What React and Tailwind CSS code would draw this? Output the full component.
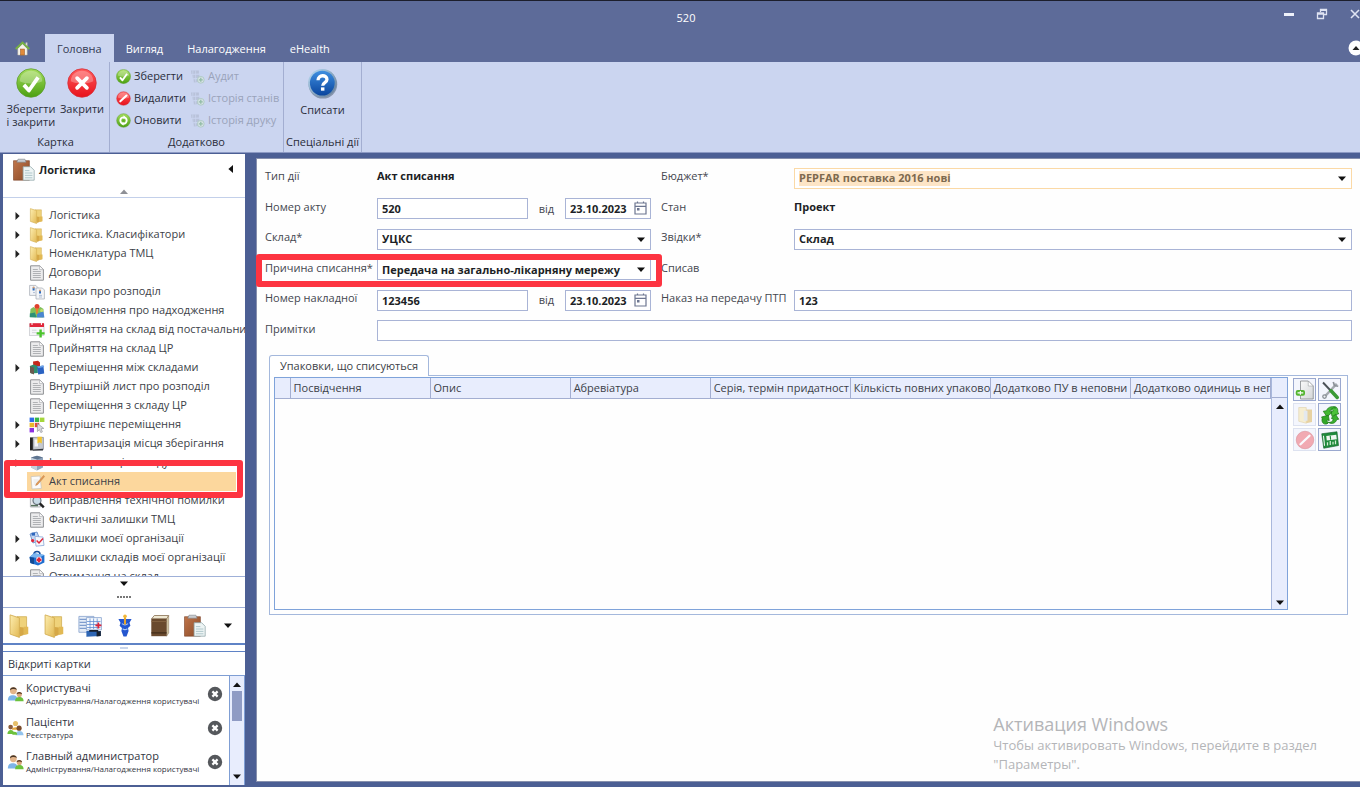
import React from "react";

/* ---------- shared gradients ---------- */
function Gradients() {
  const stops = (a, b) => [
    <stop key="a" offset="0" stopColor={a} />,
    <stop key="b" offset="1" stopColor={b} />,
  ];
  return (
    <svg width="0" height="0" className="absolute" aria-hidden="true">
      <defs>
        <linearGradient id="gGreen" x1="0" y1="0" x2="0" y2="1">{stops("#a5dd5c", "#4ba012")}</linearGradient>
        <linearGradient id="gRed" x1="0" y1="0" x2="0" y2="1">{stops("#ff5a5a", "#e8121c")}</linearGradient>
        <linearGradient id="gBlue" x1="0" y1="0" x2="0" y2="1">{stops("#3f8fe0", "#0a459e")}</linearGradient>
        <linearGradient id="gRing" x1="0" y1="0" x2="1" y2="1">{stops("#b9dcf5", "#5d7894")}</linearGradient>
        <linearGradient id="gFolder" x1="0" y1="0" x2="1" y2="1">{stops("#fdeeb0", "#e2b954")}</linearGradient>
        <linearGradient id="gPage" x1="0" y1="0" x2="1" y2="1">{stops("#fafafa", "#d4d6d8")}</linearGradient>
        <linearGradient id="gBrown" x1="0" y1="0" x2="1" y2="1">{stops("#c0754a", "#8a4a28")}</linearGradient>
      </defs>
    </svg>
  );
}

const Svg = ({ s = 16, children, className = "" }) => (
  <svg width={s} height={s} viewBox="0 0 16 16" className={"shrink-0 " + className} aria-hidden="true">
    {children}
  </svg>
);

/* ---------- ribbon icons ---------- */
const Gloss = () => <path d="M2 7a6 5.6 0 0 1 12 0C11 8.6 5 8.6 2 7z" fill="#fff" opacity=".28" />;
const CheckBall = ({ s }) => (
  <Svg s={s}>
    <circle cx="8" cy="8" r="7.6" fill="url(#gGreen)" stroke="#5c9c2d" strokeWidth=".4" />
    <Gloss />
    <path d="M4.2 9 6.9 12 11.8 5" fill="none" stroke="#fff" strokeWidth="2" strokeLinejoin="round" />
  </Svg>
);
const CrossBall = ({ s }) => (
  <Svg s={s}>
    <circle cx="8" cy="8" r="7.6" fill="url(#gRed)" stroke="#d4303a" strokeWidth=".4" />
    <Gloss />
    <path d="M5.4 5.4l5.2 5.2M10.6 5.4l-5.2 5.2" stroke="#fff" strokeWidth="2" strokeLinecap="round" />
  </Svg>
);
const SlashBall = ({ s }) => (
  <Svg s={s}>
    <circle cx="8" cy="8" r="7.3" fill="url(#gRed)" stroke="#d4303a" strokeWidth=".5" />
    <Gloss />
    <path d="M4.6 11 11.2 4.8" stroke="#fff" strokeWidth="2.2" strokeLinecap="round" />
  </Svg>
);
const RefreshBall = ({ s }) => (
  <Svg s={s}>
    <circle cx="8" cy="8" r="7.3" fill="url(#gGreen)" stroke="#5c9c2d" strokeWidth=".5" />
    <circle cx="8" cy="8" r="3.4" fill="none" stroke="#fff" strokeWidth="2" />
    <path d="M8 2.400 10.400 4.600 8 6.600zM8 13.600 5.600 11.400 8 9.400z" fill="#fff" />
    <circle cx="8" cy="8" r="1.200" fill="#5cae22" />
  </Svg>
);
const HelpBall = () => (
  <Svg s={31}>
    <circle cx="8.2" cy="8.4" r="7.4" fill="#5a6a80" opacity=".6" />
    <circle cx="7.9" cy="7.8" r="7.3" fill="url(#gRing)" />
    <circle cx="7.9" cy="7.8" r="6.4" fill="url(#gBlue)" />
    <path d="M5.7 6.3c0-3 4.600-3 4.600-.4 0 1.700-2.200 1.500-2.200 3.200" fill="none" stroke="#fff" strokeWidth="1.700" />
    <rect x="7.2" y="10" width="1.8" height="1.7" fill="#fff" />
  </Svg>
);
const AuditIcon = () => (
  <Svg s={15} className="opacity-60">
    <path d="M1 1.600h8.500v3.200l-8 .4zM2 6.200h8v3l-7 .6zM3.600 11h5v2.800l-4.400.6z" fill="#aeb7cd" />
    <path d="M3 1.600v12M6 1.600v12" stroke="#cbd5f0" strokeWidth=".8" fill="none" />
    <circle cx="11.500" cy="11.500" r="3.600" fill="#dfeadf" stroke="#8fbf98" strokeWidth=".8" />
    <path d="M11.500 9.400v4.200M9.400 11.500h4.200" stroke="#6fae78" strokeWidth="1.400" />
  </Svg>
);
const HomeIcon = () => (
  <Svg s={15}>
    <path d="M3 8v7h10V8L8 3z" fill="#f6f3ea" stroke="#b9b29c" strokeWidth=".5" />
    <path d="M.8 8.6 8 1.6l7.2 7" fill="none" stroke="#76b043" strokeWidth="2.1" />
    <path d="M11.4 1.6h1.8v4l-1.8-1.8z" fill="#d9d6c8" />
    <rect x="6" y="8.6" width="4" height="6.4" fill="#e08a3a" stroke="#9a531a" strokeWidth=".6" />
  </Svg>
);

/* ---------- tree icons ---------- */
const Folder = ({ s = 16 }) => (
  <Svg s={s}>
    <path d="M6 1.800h6.400v11.4H6z" fill="#efd27a" stroke="#cfab50" strokeWidth=".5" />
    <path d="M10.500 8.500h3v4.800l-3 .7z" fill="#e2b954" />
    <path d="M1.400.6 7.600 2.600v13L1.400 13.4z" fill="url(#gFolder)" stroke="#d4ae52" strokeWidth=".6" />
    <path d="M7.800 8.6l2.700.4v5L7.800 15z" fill="#d6a846" />
  </Svg>
);
const Page = () => (
  <Svg>
    <path d="M1.600.8h9.200l3.600 3.600v10.800H1.600z" fill="#ececed" stroke="#8f9194" strokeWidth="1" />
    <path d="M10.600.8v3.800h3.800z" fill="#fff" stroke="#a2a4a7" strokeWidth=".6" />
    <path d="M3.800 4.500h5M3.800 6.500h8M3.800 8.500h8M3.800 10.500h8M3.800 12.500h8" stroke="#b0b2b5" strokeWidth="1" />
  </Svg>
);
const TwoPages = () => (
  <Svg>
    <path d="M.6 1.4h6.2l2 2v8H.6z" fill="#f3f5f8" stroke="#a3a9b2" strokeWidth=".7" />
    <path d="M7 4h6.4l2 2v9H7z" fill="#f3f5f8" stroke="#a3a9b2" strokeWidth=".7" />
    <path d="M3.6 3.6h2v3h-2zM10 6.6h2v3h-2z" fill="#2f6fc2" />
    <path d="M4 8.6h2M10 11.4h3M10 13h3" stroke="#9fb0ca" strokeWidth=".8" />
    <circle cx="4.6" cy="3.6" r="1" fill="#d79b6c" />
    <circle cx="11" cy="6.6" r="1" fill="#d79b6c" />
  </Svg>
);
const Crowd = () => (
  <Svg>
    <path d="M1.500 6l3-2 3 2 4-2 3 2v8.500L.8 14z" fill="#7fc05c" />
    <path d="M.8 10.500l5-1 2 5-7-.3z" fill="#2e8f78" />
    <path d="M8 10.500l6.400-2 1 6H8z" fill="#4a86d0" />
    <circle cx="8" cy="3.400" r="2.500" fill="#e0402d" />
    <path d="M6.400 5.400h3.200L8.600 11H7.400z" fill="#e6842d" />
    <circle cx="12.600" cy="7.400" r="1.500" fill="#c4dd6a" />
  </Svg>
);
const CalendarAdd = () => (
  <Svg>
    <rect x=".6" y="2" width="14.400" height="11.6" fill="#f6f6f8" stroke="#b9bcc2" strokeWidth=".6" />
    <rect x=".6" y="1.2" width="14.400" height="3.800" fill="#e0263a" />
    <path d="M3 .6v2.400M12.400.6v2.400" stroke="#fff" strokeWidth="1" />
    <path d="M3 8.2h4.500M3 10.6h4.500" stroke="#d5d7dc" strokeWidth="1" />
    <path d="M11.6 7.4v8M7.600 11.4h8" stroke="#4cc42c" strokeWidth="2.400" />
  </Svg>
);
const Cubes = () => (
  <Svg>
    <path d="M4 1.6l5-.8 2 1.6v6L4.600 9z" fill="#c5281c" />
    <path d="M.8 6l4-1.400 4 1.4v7l-7 .6z" fill="#2f8f6f" />
    <path d="M1 6.600l4 .8v7l-4-1.6z" fill="#6b5a50" />
    <path d="M8 6.600l6.400-1 .8 8-6 1z" fill="#2a62c2" />
    <path d="M8 6.600l1.600 1.400 5.600-1-.8-1.400z" fill="#6ea4e8" />
  </Svg>
);
const Squares = () => (
  <Svg>
    <rect x=".6" y=".6" width="4.400" height="4.400" fill="#2d6bea" />
    <rect x="5.800" y=".6" width="4.400" height="4.400" fill="#34b54a" />
    <rect x="11" y=".6" width="4.400" height="4.400" fill="#a5d63b" />
    <rect x=".6" y="5.800" width="4.400" height="4.400" fill="#e8b92c" />
    <rect x="5.800" y="5.800" width="4.400" height="4.400" fill="#e24a3a" />
    <rect x=".6" y="11" width="4.400" height="4.400" fill="#8b2ee0" />
    <path d="M8.400 6.400l6.400 5-2.800.4 1.400 3-1.600.8-1.400-3-2 2z" fill="#dcdce0" stroke="#93969c" strokeWidth=".7" />
  </Svg>
);
const Ledger = () => (
  <Svg>
    <path d="M1 1.400h3v13H1z" fill="#222" />
    <path d="M4 1.400h10.400v12L4 14.600z" fill="#c6cad0" stroke="#6e727a" strokeWidth=".6" />
    <path d="M5.600 3.500h3.400v7H5.600z" fill="#f4f5f8" />
    <path d="M8.400.8h4.400v6.800l-2.200-1.400-2.200 1.400z" fill="#f3c52b" />
    <path d="M4 13.400l10-.6v1.800H4z" fill="#33363c" />
  </Svg>
);
const Database = () => (
  <Svg>
    <path d="M2 2.600 8 .8l6 1.800v10L8 15.400l-6-2.800z" fill="#8fa3bb" />
    <path d="M2 2.600 8 4.400v11L2 12.600z" fill="#c5d0dc" />
    <path d="M2 2.600 8 .8l6 1.800-6 1.800z" fill="#5f7590" />
  </Svg>
);
const NoteEdit = () => (
  <Svg>
    <path d="M2 2.600 11 2l1.400 12.400L3 15z" fill="#fbfbfb" stroke="#c6c2b8" strokeWidth=".7" />
    <path d="M4.400 6h5M4.600 8h5M4.800 10h4" stroke="#e2e2e2" strokeWidth=".8" />
    <path d="M14.600 1.400 7.400 9.600l-.8 2 2-.9 7-8.200z" fill="#e09a57" stroke="#b8743a" strokeWidth=".4" />
  </Svg>
);
const SearchPage = () => (
  <Svg>
    <path d="M1.400 1h10v13h-10z" fill="#e8eaec" stroke="#999ca0" strokeWidth=".7" />
    <circle cx="8" cy="7.600" r="4" fill="#c9dbe6" stroke="#6c7680" strokeWidth="1.200" />
    <path d="M10.800 10.400l4 4" stroke="#222" strokeWidth="2.400" />
    <path d="M2 12.600h7" stroke="#55705a" strokeWidth="1.400" />
  </Svg>
);
const OrgPages = () => (
  <Svg>
    <path d="M1 3l7-2 3 8-7 3z" fill="#c6d8f2" stroke="#5b84c4" strokeWidth=".8" />
    <path d="M6 5.400l8 .6 1 8.400-8 .8z" fill="#f6f8fc" stroke="#8ba7d6" strokeWidth=".8" />
    <path d="M7.600 9.400 10 12l4-4.600" fill="none" stroke="#e0263a" strokeWidth="1.500" />
    <path d="M2.600 1.600h3.400v3H2.600z" fill="#2e67bd" />
    <circle cx="3.600" cy="9.600" r="1.600" fill="#e0263a" />
  </Svg>
);
const MedBag = () => (
  <Svg>
    <path d="M5 4.400C5 .6 11 .6 11 4.400" fill="none" stroke="#174f9b" strokeWidth="1.600" />
    <path d="M.6 7 5 3.200 15.400 5v7.400L9 15.600 1.400 13z" fill="#1f6fd0" />
    <path d="M.6 7 5 3.200 15.400 5 9.600 8z" fill="#7bb6f0" />
    <path d="M.6 7 5 7.800v6.400L1.400 13z" fill="#124a94" />
    <circle cx="10" cy="9.800" r="3" fill="#f8dfe2" />
    <path d="M10 7.400v4.800M7.600 9.800h4.800" stroke="#e0263a" strokeWidth="2.200" />
  </Svg>
);

/* ---------- dock icons ---------- */
const Clipboard = ({ s = 24 }) => (
  <Svg s={s}>
    <path d="M1 1.800h10.600v13H1z" fill="url(#gBrown)" stroke="#7b4126" strokeWidth=".4" />
    <path d="M4 .8h4.600l.8 2H3.200z" fill="#c9ccd0" stroke="#7e8186" strokeWidth=".4" />
    <path d="M7.400 5.800h5l2.400 2.400v6.600H7.400z" fill="#edf4f4" stroke="#8ea5a8" strokeWidth=".5" />
    <path d="M8.600 8.400h3M8.600 10h5M8.600 11.600h5M8.600 13.200h5" stroke="#a9c2c6" strokeWidth=".6" />
  </Svg>
);
const Schedule = () => (
  <Svg s={24}>
    <path d="M.6 1.600h10v10.600H.6z" fill="#e4ecf7" stroke="#7f9ccb" strokeWidth=".5" />
    <path d="M1 3.600h6M1 5.600h6M1 7.600h6M1 9.600h6" stroke="#7f9dce" strokeWidth=".8" />
    <path d="M5.600 2.400h10v8.200h-10z" fill="#f4f8fd" stroke="#7f9ccb" strokeWidth=".5" />
    <path d="M6 5h9M6 7h9M6 9h9M8 3v7M10.400 3v7M12.800 3v7" stroke="#5b8ad0" strokeWidth=".5" />
    <path d="M13.600 5.600v4M11.600 7.600h4" stroke="#e0263a" strokeWidth="1.100" />
    <path d="M5.600 11.400h9.600v3.200l-9.600.6z" fill="#2d65b4" />
    <path d="M7.500 10.600h6v1.200h-6zM12.400 12l2.800-.6v3.200l-2.800.4z" fill="#17202e" />
  </Svg>
);
const Caduceus = () => (
  <Svg s={24}>
    <path d="M3.600 3.400h8.800L11 5.800l.6 2-1.600 1.600.4 2L9 15H7l-1.400-3.600.4-2L4.400 7.800l.6-2z" fill="#2456cf" />
    <path d="M6 6.400c1.600 1.400 2.400 1.400 4 0M6.400 9.800c1.200 1 2 1 3.200 0" stroke="#a9c8f7" strokeWidth=".8" fill="none" />
    <path d="M8 1v6" stroke="#e7a52c" strokeWidth="1.400" />
    <circle cx="8" cy="1.500" r="1.200" fill="#f1b73a" />
  </Svg>
);
const Book = () => (
  <Svg s={24}>
    <path d="M2.400 3.200 4.200 1h9.600l-1.200 2.200z" fill="#efe8d2" stroke="#80674a" strokeWidth=".5" />
    <path d="M12.400 3.200l1.400-2v11.400l-1.400 2.200z" fill="#d3c7a6" stroke="#80674a" strokeWidth=".3" />
    <path d="M2.200 3.200h10.200v11.600H2.200z" fill="#6a4a2e" />
    <path d="M2.200 5h10.200" stroke="#8b6a47" strokeWidth=".5" />
    <path d="M2.200 12.600h10.200" stroke="#3a2716" strokeWidth=".7" />
  </Svg>
);

/* ---------- card icons ---------- */
const Users = () => (
  <Svg s={17}>
    <path d="M.8 14.600c0-4 2-5 4.600-5s4.600 1 4.600 5z" fill="#7db4e8" />
    <circle cx="6" cy="5.400" r="3.200" fill="#e3b48a" />
    <path d="M2.800 5.200C2.600 1.400 9 1 9.200 4.800 7.600 3.400 4.600 3.400 2.800 5.200z" fill="#4a3727" />
    <path d="M7.600 15.400c0-3 1.600-4 4-4s4 1 4 4z" fill="#6cc13c" />
    <circle cx="11.600" cy="9" r="2.400" fill="#d9a87c" />
    <path d="M9 8.800c0-3 5-3 5.200 0-1.600-1-3.600-1-5.200 0z" fill="#5b3a22" />
  </Svg>
);
const Patients = () => (
  <Svg s={17}>
    <circle cx="8" cy="4.200" r="2.400" fill="#e7c06a" />
    <path d="M4.600 10c0-3 6.800-3 6.800 0z" fill="#e9a93a" />
    <circle cx="3.400" cy="7.600" r="2.200" fill="#8e5f3c" />
    <path d="M.4 14c0-5 6.400-5 6.400 0z" fill="#6cc13c" />
    <circle cx="11.400" cy="8.600" r="2.400" fill="#7a4b2a" />
    <path d="M8 15.400c0-5.400 7.600-5.400 7.600 0z" fill="#93c4ee" />
    <path d="M5 14.800c0-3.600 4.600-3.600 4.600 0z" fill="#6cc13c" />
  </Svg>
);
const CloseBadge = () => (
  <Svg>
    <circle cx="8" cy="8" r="7.200" fill="#55585c" />
    <path d="M5.400 5.400l5.200 5.200M10.600 5.400l-5.200 5.200" stroke="#fff" strokeWidth="2.200" />
  </Svg>
);

/* ---------- table tool icons ---------- */
const PageAdd = () => (
  <Svg s={20}>
    <path d="M4.400.8h6.200l4 4v10.400H4.400z" fill="url(#gPage)" stroke="#7e8184" strokeWidth=".6" />
    <path d="M10.600.8v4h4z" fill="#fff" stroke="#8e9194" strokeWidth=".4" />
    <rect x=".6" y="8" width="7.400" height="4.600" rx="1.600" fill="#55b532" />
    <path d="M2 10.300h4.600M4.300 8.800v3" stroke="#fff" strokeWidth=".9" />
  </Svg>
);
const Tools = () => (
  <Svg s={20}>
    <path d="M13.400 3 4 13" stroke="#a4a9ae" strokeWidth="2" />
    <path d="M10.600 1.600l1 2.800 3 .6" fill="none" stroke="#8c9298" strokeWidth="1.400" />
    <path d="M2.400 2 9 9" stroke="#4b5157" strokeWidth="1.500" />
    <path d="M8.800 8.600l5 5.400" stroke="#3a9a35" strokeWidth="2.800" strokeLinecap="round" />
    <circle cx="3.600" cy="13.200" r="1.400" fill="#eef0f4" stroke="#8a9096" strokeWidth="1" />
  </Svg>
);
const FolderTool = () => (
  <Svg s={20} className="opacity-50">
    <path d="M3 2h6v12.600L3 13z" fill="#f8e7a6" stroke="#cfb060" strokeWidth=".5" />
    <path d="M9 3.600h4.600v10L9 14.600z" fill="#dcb04a" />
    <path d="M7 4.600h3v8H7z" fill="#d5dde0" />
  </Svg>
);
const RefreshTool = () => (
  <Svg s={20}>
    <path d="M15.200 6.800l-5.600 2.400-.8-4.600 1.400.6c.6-1 0-1.600-1.400-1.800C10 .4 15 .2 14.200 6z" fill="#4cc23a" stroke="#1d7a18" strokeWidth=".6" />
    <path d="M5.200 4.600c1-3.600 6-4 7.400-2.200-3-.4-4.400 1-4.600 3l1.600.6-4 3.400L2.600 5z" fill="#43b834" stroke="#1d7a18" strokeWidth=".6" />
    <path d="M1.200 9.600l5.400-1.400.8 4.200-1.600-.4c-.6 1-.2 1.600 1.200 1.800C5.600 16.400.4 15.800 1.800 10.400z" fill="#32a828" stroke="#1d7a18" strokeWidth=".6" />
    <path d="M7 14c3-.2 3.400-1.600 3.400-3L9 10.600l3.400-3.200 2.600 4-1.600.2c-.8 3-4 4-6.400 2.400z" fill="#3ab02e" stroke="#1d7a18" strokeWidth=".6" />
  </Svg>
);
const ForbidTool = () => (
  <Svg s={20} className="opacity-50">
    <circle cx="8" cy="8" r="7" fill="#f0606a" stroke="#c4303a" strokeWidth=".5" />
    <path d="M4.400 11.400 11.600 4.600" stroke="#fff" strokeWidth="1.900" strokeLinecap="round" />
  </Svg>
);
const ExportTool = () => (
  <Svg s={20}>
    <path d="M1.400 3 13.600 1.400l1.200 11L3 14.600z" fill="#1f8a3b" stroke="#14602a" strokeWidth=".5" />
    <path d="M5 4.800l8-1 .4 3.600-8 1z" fill="#f1f7f1" />
    <path d="M6 12.400V9.800M8.200 12V8.800M10.400 11.600V9.400M12.400 11.400V8.400" stroke="#d4edd6" strokeWidth="1" />
    <path d="M2.800 4.600l.8 8" stroke="#fff" strokeWidth=".8" />
    <path d="M8.200 4.600l.3 3.200" stroke="#1f8a3b" strokeWidth=".9" />
  </Svg>
);

/* ---------- arrows ---------- */
const Down = ({ className = "" }) => (
  <svg width="8" height="5" viewBox="0 0 8 5" className={className} aria-hidden="true"><path d="M0 .4h8L4 5z" fill="#111" /></svg>
);
const Up = ({ fill = "#111" }) => (
  <svg width="8" height="5" viewBox="0 0 8 5" aria-hidden="true"><path d="M0 5h8L4 .4z" fill={fill} /></svg>
);

/* ---------- ribbon ---------- */
function Group({ label, children, className }) {
  return (
    <section className={"flex shrink-0 flex-col border-r border-[#a3aed1] " + className}>
      <div className="flex flex-1">{children}</div>
      <div className="h-5 whitespace-nowrap text-center leading-5">{label}</div>
    </section>
  );
}
const BigButton = ({ icon, children, className }) => (
  <button type="button" className={"flex h-[66px] flex-col items-center pt-1.5 " + className}>
    {icon}
    <span className="mt-1 whitespace-nowrap text-left leading-[13px]">{children}</span>
  </button>
);
const SmallButton = ({ icon, children, disabled }) => (
  <button type="button" disabled={disabled} className="flex h-[22px] items-center gap-[3px] whitespace-nowrap disabled:text-[#9aa3ba]">
    {icon}
    {children}
  </button>
);

const tabs = ["Вигляд", "Налагодження", "eHealth"];

function Ribbon() {
  return (
    <header className="shrink-0">
      <div className="grid h-[34px] grid-cols-[1fr_auto_1fr] items-center border-t border-[#1c1e2c] text-white">
        <span />
        <h1 className="pl-3 pt-px">520</h1>
        <div className="flex h-full items-start justify-end gap-[21px] pt-[7px]">
          <button type="button" aria-label="Згорнути" className="h-3 w-3">
            <svg width="12" height="12" viewBox="0 0 12 12"><path d="M1 6.500h10" stroke="#eef1fa" strokeWidth="3" /></svg>
          </button>
          <button type="button" aria-label="Відновити" className="h-3 w-3">
            <svg width="12" height="12" viewBox="0 0 12 12"><path d="M4.500 4V1.500h6v5H8M1.500 5h6v5.500h-6zM1.500 6h6M4.500 2.300h6" stroke="#dfe4f3" strokeWidth="1.300" fill="none" /></svg>
          </button>
          <button type="button" aria-label="Закрити вікно" className="h-3 w-[11px]">
            <svg width="12" height="12" viewBox="0 0 12 12"><path d="M2 2l8 8M10 2l-8 8" stroke="#dfe4f3" strokeWidth="1.600" /></svg>
          </button>
        </div>
      </div>
      <nav className="flex h-7 items-stretch text-white">
        <button type="button" aria-label="Додому" className="flex w-[45px] items-center justify-center"><HomeIcon /></button>
        <button type="button" className="bg-[#cbd5f0] px-3 pt-0.5 text-[#333a52]">Головна</button>
        {tabs.map((t) => (
          <button type="button" key={t} className="px-3 pt-0.5">{t}</button>
        ))}
        <button type="button" aria-label="Згорнути стрічку" className="ml-auto flex h-4 w-3 items-center self-center overflow-hidden">
          <svg width="16" height="16" viewBox="0 0 16 16" className="shrink-0"><circle cx="8" cy="8" r="7.500" fill="#fff" /><path d="M4.500 10h7L8 6z" fill="#222" /></svg>
        </button>
      </nav>
      <div className="flex h-[91px] border-b border-[#8d9ac4] bg-[#cbd5f0] pl-0.5 text-[#2a2d3a]">
        <Group label="Картка" className="w-[108px]">
          <BigButton icon={<CheckBall s={30} />} className="w-[58px]">Зберегти<br />і закрити</BigButton>
          <BigButton icon={<CrossBall s={30} />} className="w-11">Закрити</BigButton>
        </Group>
        <Group label="Додатково" className="w-[174px]">
          <div className="ml-1.5 flex w-[74px] flex-col pt-[3px]">
            <SmallButton icon={<CheckBall s={15} />}>Зберегти</SmallButton>
            <SmallButton icon={<SlashBall s={15} />}>Видалити</SmallButton>
            <SmallButton icon={<RefreshBall s={15} />}>Оновити</SmallButton>
          </div>
          <div className="flex flex-col pt-[3px]">
            <SmallButton disabled icon={<AuditIcon />}>Аудит</SmallButton>
            <SmallButton disabled icon={<AuditIcon />}>Історія станів</SmallButton>
            <SmallButton disabled icon={<AuditIcon />}>Історія друку</SmallButton>
          </div>
        </Group>
        <Group label="Спеціальні дії" className="w-[78px]">
          <BigButton icon={<HelpBall />} className="w-full">Списати</BigButton>
        </Group>
      </div>
    </header>
  );
}

/* ---------- sidebar ---------- */
const tree = [
  ["Логістика", Folder, true],
  ["Логістика. Класифікатори", Folder, true],
  ["Номенклатура ТМЦ", Folder, true],
  ["Договори", Page],
  ["Накази про розподіл", TwoPages],
  ["Повідомлення про надходження", Crowd],
  ["Прийняття на склад від постачальни", CalendarAdd],
  ["Прийняття на склад ЦР", Page],
  ["Переміщення між складами", Cubes, true],
  ["Внутрішній лист про розподіл", Page],
  ["Переміщення з складу ЦР", Page],
  ["Внутрішнє переміщення", Squares, true],
  ["Інвентаризація місця зберігання", Ledger, true],
  ["Інвентаризація складу", Database, true],
  ["Акт списання", NoteEdit, false, true],
  ["Виправлення технічної помилки", SearchPage],
  ["Фактичні залишки ТМЦ", Page],
  ["Залишки моєї організації", OrgPages, true],
  ["Залишки складів моєї організації", MedBag, true],
  ["Отримання на склад", Page],
];

const docks = [
  ["Логістика", <Folder s={24} />],
  ["Довідники", <Folder s={24} />],
  ["Розклад", <Schedule />],
  ["Медицина", <Caduceus />],
  ["Книга", <Book />],
  ["Склад", <Clipboard />],
];

const cards = [
  ["Користувачі", "Адміністрування/Налагодження користувачі", Users],
  ["Пацієнти", "Реєстратура", Patients],
  ["Главный администратор", "Адміністрування/Налагодження користувачі", Users],
];

function Sidebar() {
  return (
    <aside className="flex w-[242px] shrink-0 flex-col pb-0.5 pt-px">
      <section className="flex min-h-0 flex-1 flex-col bg-white">
        <div className="relative flex h-[44px] shrink-0 items-start border-b border-[#c3d0ea] pl-[9px] pr-3 pt-1">
          <Clipboard s={24} />
          <h2 className="ml-[3px] mt-1 font-bold leading-4">Логістика</h2>
          <button type="button" aria-label="Сховати панель" className="ml-auto mt-[7px]">
            <svg width="5" height="8" viewBox="0 0 5 8"><path d="M5 0v8L.4 4z" fill="#111" /></svg>
          </button>
          <div className="absolute bottom-0 left-[117px] flex h-2"><Up fill="#8e9096" /></div>
        </div>
        <ul className="min-h-0 flex-1 overflow-hidden pr-1 pt-2 text-[#3c3f48]">
          {tree.map(([name, Icon, open, active]) => (
            <li key={name} className="relative flex h-[19px] items-center">
              <span className="flex w-6 shrink-0 justify-center pl-1">
                {open && <svg width="5" height="8" viewBox="0 0 5 8" aria-hidden="true"><path d="M.5 0v8L4.600 4z" fill="#222" /></svg>}
              </span>
              <button
                type="button"
                className={
                  "mr-[5px] flex h-[19px] min-w-0 flex-1 items-center gap-1 whitespace-nowrap pl-0.5 " +
                  (active ? "bg-[#fcd79d]" : "")
                }
              >
                <Icon />
                {name}
              </button>
              {active && <span className="pointer-events-none absolute -bottom-[7px] -right-0.5 -top-3 left-px z-10 rounded-[3px] border-[6px] border-[#fd3441]" />}
            </li>
          ))}
        </ul>
        <div className="flex h-8 shrink-0 flex-col items-center border-y border-[#9fb0d8] pt-1">
          <Down />
          <svg width="14" height="2" className="mt-[10px]" aria-hidden="true"><path d="M0 1h14" stroke="#777" strokeWidth="2" strokeDasharray="2 1" /></svg>
        </div>
        <div className="flex h-[35px] shrink-0 items-center gap-[11px] pl-[5px]">
          {docks.map(([name, icon]) => (
            <button type="button" key={name} aria-label={name}>{icon}</button>
          ))}
          <button type="button" aria-label="Більше" className="ml-1.5"><Down /></button>
        </div>
      </section>
      <div className="flex h-[9px] shrink-0 items-center justify-center border-b border-t-2 border-[#5f83c6] bg-white">
        <span className="h-0.5 w-2 bg-[#c9d6ec]" />
      </div>
      <h2 className="flex h-6 shrink-0 items-center border-b border-[#7f9ed4] bg-white pl-[5px] pt-0.5 text-[#33363f]">Відкриті картки</h2>
      <div className="flex h-[109px] shrink-0 bg-white">
        <ul className="min-w-0 flex-1">
          {cards.map(([name, place, Icon]) => (
            <li key={name} className="flex h-[34px] items-center pl-1 pr-1.5 pt-px">
              <Icon />
              <span className="ml-0.5 min-w-0 flex-1 whitespace-nowrap text-[#33363f]">
                <span className="block leading-[15px]">{name}</span>
                <span className="block text-[8px] leading-3">{place}</span>
              </span>
              <button type="button" aria-label={"Закрити " + name}><CloseBadge /></button>
            </li>
          ))}
        </ul>
        <div className="flex w-4 flex-col items-center border-x border-[#7f9ed4] bg-[#e8edfd] py-1.5">
          <Up />
          <div className="mt-1 h-[30px] w-2.5 bg-[#8f9bc4]" />
          <Down className="mt-auto" />
        </div>
      </div>
    </aside>
  );
}

/* ---------- form ---------- */
const box = "h-[21px] w-full min-w-0 rounded-none border border-[#a9b4d6] bg-white pl-1 font-bold text-[#1d1f26] outline-none";
const labelClass = "whitespace-nowrap pb-1 text-[#44474f]";
const labelRight = "whitespace-nowrap pb-1 pl-2.5 text-[#44474f]";

const Select = ({ id, value, boxClass = "" }) => (
  <div className="relative">
    <select id={id} defaultValue={value} className={box + " block appearance-none " + boxClass}>
      <option>{value}</option>
    </select>
    <Down className="pointer-events-none absolute right-1.5 top-2" />
  </div>
);

const NumberAndDate = ({ id, value }) => (
  <div className="flex items-center">
    <div className="w-[151px]"><input id={id} defaultValue={value} className={box} /></div>
    <label htmlFor={id + "-date"} className="w-[37px] text-center text-[#44474f]">від</label>
    <div className="relative w-[86px]">
      <input id={id + "-date"} defaultValue="23.10.2023" className={box} />
      <svg width="13" height="14" viewBox="0 0 13 14" className="pointer-events-none absolute right-1 top-[3px]" aria-hidden="true">
        <path d="M1 2h11v11H1zM1 5.300h11M3.500.5v2M9.500.5v2" fill="none" stroke="#6d7690" strokeWidth="1.200" />
        <rect x="3" y="7" width="2.500" height="2.500" fill="#6d7690" />
      </svg>
    </div>
  </div>
);

function Form() {
  return (
    <form className="grid h-[183px] shrink-0 auto-rows-fr grid-cols-[112px_274px_143px_minmax(0,1fr)] items-center pl-2 pr-2">
      <span className={labelClass}>Тип дії</span>
      <output className="pb-1 font-bold">Акт списання</output>
      <label htmlFor="budget" className={labelRight}>Бюджет*</label>
      <Select id="budget" value="PEPFAR поставка 2016 нові" boxClass="border-[#fbd9a6] text-[#7d6a4f] bg-[linear-gradient(#fde5c6,#fde5c6)] bg-no-repeat bg-[length:151px_15px] bg-[position:4px_2px]" />

      <label htmlFor="act" className={labelClass}>Номер акту</label>
      <NumberAndDate id="act" value="520" />
      <span className={labelRight}>Стан</span>
      <output className="pb-1 font-bold">Проект</output>

      <label htmlFor="store" className={labelClass}>Склад*</label>
      <Select id="store" value="УЦКС" />
      <label htmlFor="from" className={labelRight}>Звідки*</label>
      <Select id="from" value="Склад" />

      <label htmlFor="reason" className={labelClass}>Причина списання*</label>
      <div className="relative">
        <Select id="reason" value="Передача на загально-лікарняну мережу" />
        <span className="pointer-events-none absolute -bottom-[7px] -left-[121px] -right-[11px] -top-[5px] z-10 rounded-[3px] border-[6px] border-[#fd3441]" />
      </div>
      <span className={labelRight}>Списав</span>
      <span />

      <label htmlFor="bill" className={labelClass}>Номер накладної</label>
      <NumberAndDate id="bill" value="123456" />
      <label htmlFor="order" className={labelRight}>Наказ на передачу ПТП</label>
      <input id="order" defaultValue="123" className={box} />

      <label htmlFor="notes" className={labelClass}>Примітки</label>
      <input id="notes" className={box + " col-span-3"} />
    </form>
  );
}

const columns = [
  "Посвідчення",
  "Опис",
  "Абревіатура",
  "Серія, термін придатност",
  "Кількість повних упаково",
  "Додатково ПУ в неповни",
  "Додатково одиниць в неп",
];

const tools = [
  ["Додати", <PageAdd />, false],
  ["Налаштувати", <Tools />, false],
  ["Відкрити", <FolderTool />, true],
  ["Оновити таблицю", <RefreshTool />, false],
  ["Вилучити", <ForbidTool />, true],
  ["Експорт", <ExportTool />, false],
];

function Packages() {
  return (
    <section className="ml-3 mr-3 mt-[9px]">
      <button type="button" className="relative z-10 -mb-px block h-[21px] w-[160px] rounded-t-[3px] border border-b-0 border-[#a4b8dc] bg-white text-[#3c3f48]">
        Упаковки, що списуються
      </button>
      <div className="flex border border-[#a4b8dc] pb-1 pl-1 pr-1.5 pt-px">
        <div className="flex h-[233px] min-w-0 flex-1 border border-[#7fa3da]">
          <div className="min-w-0 flex-1">
            <table className="w-full table-fixed border-collapse">
              <thead>
                <tr className="h-5 bg-[#e8edfd] text-[#3c3f48]">
                  <th className="w-[15px] border-b border-r border-[#a3aed1]" />
                  {columns.map((c) => (
                    <th key={c} className="overflow-hidden whitespace-nowrap border-b border-r border-[#a3aed1] pl-[3px] text-left font-normal leading-[18px]">{c}</th>
                  ))}
                </tr>
              </thead>
            </table>
          </div>
          <div className="flex w-4 flex-col items-center border-l border-[#a9b8dc] bg-[#e8edfd] pb-1">
            <div className="mb-1.5 h-5 w-full border-b border-[#a3aed1]" />
            <Up />
            <Down className="mt-auto" />
          </div>
        </div>
        <div className="ml-[5px] grid grid-cols-2 content-start gap-x-0.5 gap-y-0.5 pt-px">
          {tools.map(([name, icon, off]) => (
            <button
              type="button"
              key={name}
              aria-label={name}
              disabled={off}
              className="flex h-[23px] w-[23px] items-center justify-center border border-[#9aa8cf] bg-[#f4f6fd] disabled:border-[#dde2f0]"
            >
              {icon}
            </button>
          ))}
        </div>
      </div>
    </section>
  );
}

export default function App() {
  return (
    <div className="flex h-screen min-h-[600px] flex-col overflow-hidden bg-[#5d6b99] font-['Open_Sans','Noto_Sans',sans-serif] text-[11px] text-[#1d1f26]">
      <Gradients />
      <Ribbon />
      <div className="flex min-h-0 flex-1 bg-[#4c5f94] pl-[3px]">
        <Sidebar />
        <main className="relative mb-[5px] ml-[11px] mt-[5px] flex min-w-0 flex-1 flex-col border-y border-l border-[#8790ad] bg-[#fefefe] pt-1">
          <Form />
          <Packages />
          <div className="pointer-events-none absolute bottom-[7px] right-[43px] text-[#b4b5b8]">
            <p className="text-[18px] leading-6">Активация Windows</p>
            <p className="text-[13px] leading-[19px]">Чтобы активировать Windows, перейдите в раздел<br />"Параметры".</p>
          </div>
        </main>
      </div>
    </div>
  );
}
